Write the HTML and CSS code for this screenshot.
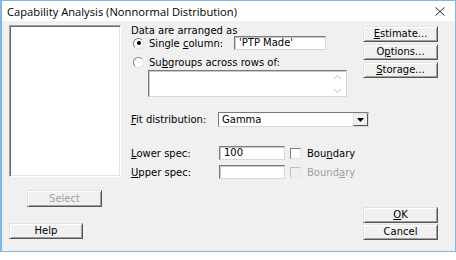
FILE: index.html
```html
<!DOCTYPE html>
<html>
<head>
<meta charset="utf-8">
<link rel="stylesheet" href="styles.css">
</head>
<body>
<div class="window">
  <div class="titlebar">
    <span class="title">Capability Analysis (Nonnormal Distribution)</span>
    <svg class="close" width="10" height="9" viewBox="0 0 10 9"><path d="M0.5 0.5 L9.5 8.5 M9.5 0.5 L0.5 8.5" stroke="#222" stroke-width="1" fill="none"/></svg>
  </div>
  <div class="client">
    <div class="col-left">
      <div class="listbox"></div>
      <div class="btn select disabled">Select</div>
      <div class="btn help">Help</div>
    </div>
    <div class="col-main">
      <div class="top">
        <div class="arrange">
          <div class="lbl-line">Data are arranged as</div>
          <div class="row single">
            <span class="radio checked"></span>
            <span class="rlabel">Single <u>c</u>olumn:</span>
            <span class="field colname">'PTP Made'</span>
          </div>
          <div class="row sub">
            <span class="radio"></span>
            <span class="rlabel">Su<u>b</u>groups across rows of:</span>
          </div>
          <div class="field multi">
            <svg class="spin" width="9" height="20" viewBox="0 0 9 20"><path d="M1 5 L4.5 1.5 L8 5 M1 15 L4.5 18.5 L8 15" stroke="#b8b8b8" stroke-width="1" fill="none"/></svg>
          </div>
        </div>
        <div class="btnstack">
          <div class="btn"><u>E</u>stimate...</div>
          <div class="btn">O<u>p</u>tions...</div>
          <div class="btn"><u>S</u>torage...</div>
        </div>
      </div>
      <div class="row fit">
        <span class="flabel"><u>F</u>it distribution:</span>
        <div class="combo">
          <span class="cval">Gamma</span>
          <span class="cbtn"><svg width="7" height="4" viewBox="0 0 7 4"><path d="M0 0 H7 L3.5 4 Z" fill="#000"/></svg></span>
        </div>
      </div>
      <div class="row spec lower">
        <span class="flabel"><u>L</u>ower spec:</span>
        <span class="field specin">100</span>
        <span class="check"></span>
        <span class="clabel">Bou<u>n</u>dary</span>
      </div>
      <div class="row spec upper">
        <span class="flabel"><u>U</u>pper spec:</span>
        <span class="field specin"></span>
        <span class="check disabled"></span>
        <span class="clabel disabled">Bound<u>a</u>ry</span>
      </div>
      <div class="okcancel">
        <div class="btn"><u>O</u>K</div>
        <div class="btn">Cancel</div>
      </div>
    </div>
  </div>
</div>
</body>
</html>
```

FILE: styles.css
```css
html, body {
  margin: 0;
  padding: 0;
  background: #ffffff;
}
body {
  width: 456px;
  height: 260px;
  overflow: hidden;
  font-family: "DejaVu Sans", Verdana, sans-serif;
  font-size: 10px;
  color: #000;
}
u { text-decoration: underline; text-underline-offset: 1px; }

.window {
  height: 250px;
  border: 1px solid #7fb8e6;
  border-left-width: 2px;
  width: 453px;
  background: #f0f0f0;
  display: flex;
  flex-direction: column;
}
.titlebar {
  height: 20px;
  background: #ffffff;
  display: flex;
  align-items: center;
  justify-content: space-between;
  padding: 0 10px 0 5px;
}
.title {
  font-family: "Open Sans", "Noto Sans", sans-serif;
  font-size: 11.2px;
  color: #000;
}
.close { display: block; }

.client {
  flex: 1;
  display: flex;
  padding: 4px 0 0 7px;
}
.col-left {
  width: 112px;
  display: flex;
  flex-direction: column;
}
.listbox {
  height: 150px;
  background: #fff;
  border: 1px solid;
  border-color: #a0a0a0 #ffffff #ffffff #a0a0a0;
  box-shadow: inset 1px 1px 0 #696969, inset -1px -1px 0 #e3e3e3;
}
.btn {
  box-sizing: border-box;
  width: 75px;
  height: 16px;
  display: flex;
  align-items: center;
  justify-content: center;
  background: #f0f0f0;
  border: 1px solid;
  border-color: #e3e3e3 #555 #555 #e3e3e3;
  box-shadow: inset 1px 1px 0 #fff, inset -1px -1px 0 #a0a0a0;
  line-height: 12px;
}
.btn.disabled { color: #a0a0a0; }
.select { margin: 13px 0 0 18px; height: 17px; }
.help { margin-top: 16px; width: 74px; }

.col-main {
  margin-left: 10px;
  flex: 1;
  display: flex;
  flex-direction: column;
}
.top {
  display: flex;
}
.arrange {
  width: 232px;
}
.lbl-line {
  height: 11px;
  line-height: 11px;
}
.row {
  display: flex;
  align-items: center;
}
.single { height: 14px; }
.single .rlabel { width: 85px; }
.sub { height: 12px; margin-top: 6px; }
.radio {
  box-sizing: border-box;
  width: 11px;
  height: 11px;
  margin: 0 5px 0 2px;
  border-radius: 50%;
  background: #fff;
  border: 1px solid;
  border-color: #808080 #e3e3e3 #e3e3e3 #808080;
  position: relative;
}
.radio.checked::after {
  content: "";
  position: absolute;
  left: 2.5px;
  top: 2.5px;
  width: 4px;
  height: 4px;
  border-radius: 50%;
  background: #000;
}
.rlabel { white-space: nowrap; }
.field {
  box-sizing: border-box;
  background: #fff;
  border: 1px solid;
  border-color: #7a7a7a #d8d8d8 #d8d8d8 #7a7a7a;
  box-shadow: inset 1px 1px 0 #c8c8c8;
  line-height: 12px;
  padding-left: 4px;
  white-space: nowrap;
}
.colname {
  width: 92px;
  height: 14px;
}
.multi {
  margin: 2px 0 0 17px;
  width: 199px;
  height: 27px;
  display: flex;
  justify-content: flex-end;
  align-items: center;
  padding-right: 4px;
}
.btnstack {
  margin-top: 1px;
  display: flex;
  flex-direction: column;
  gap: 2px;
}
.fit { margin-top: 15px; height: 15px; }
.flabel { width: 87px; white-space: nowrap; }
.combo {
  box-sizing: border-box;
  width: 151px;
  height: 15px;
  background: #fff;
  border: 1px solid;
  border-color: #7a7a7a #d8d8d8 #d8d8d8 #7a7a7a;
  display: flex;
  align-items: center;
}
.cval { flex: 1; padding-left: 3px; }
.cbtn {
  box-sizing: border-box;
  width: 15px;
  height: 13px;
  background: #f0f0f0;
  border: 1px solid;
  border-color: #e3e3e3 #555 #555 #e3e3e3;
  display: flex;
  align-items: center;
  justify-content: center;
}
.cbtn svg { display: block; }
.spec { height: 14px; }
.lower { margin-top: 19px; }
.upper { margin-top: 5px; }
.specin {
  width: 66px;
  height: 14px;
  margin-left: 1px;
}
.check {
  box-sizing: border-box;
  width: 11px;
  height: 11px;
  margin: 0 6px 0 5px;
  background: #fff;
  border: 1px solid;
  border-color: #808080 #e3e3e3 #e3e3e3 #808080;
}
.check.disabled { border-color: #c0c0c0 #e8e8e8 #e8e8e8 #c0c0c0; background: #f0f0f0; }
.clabel.disabled { color: #a0a0a0; }
.okcancel {
  margin: 28px 0 0 232px;
  display: flex;
  flex-direction: column;
  gap: 1px;
}
```
